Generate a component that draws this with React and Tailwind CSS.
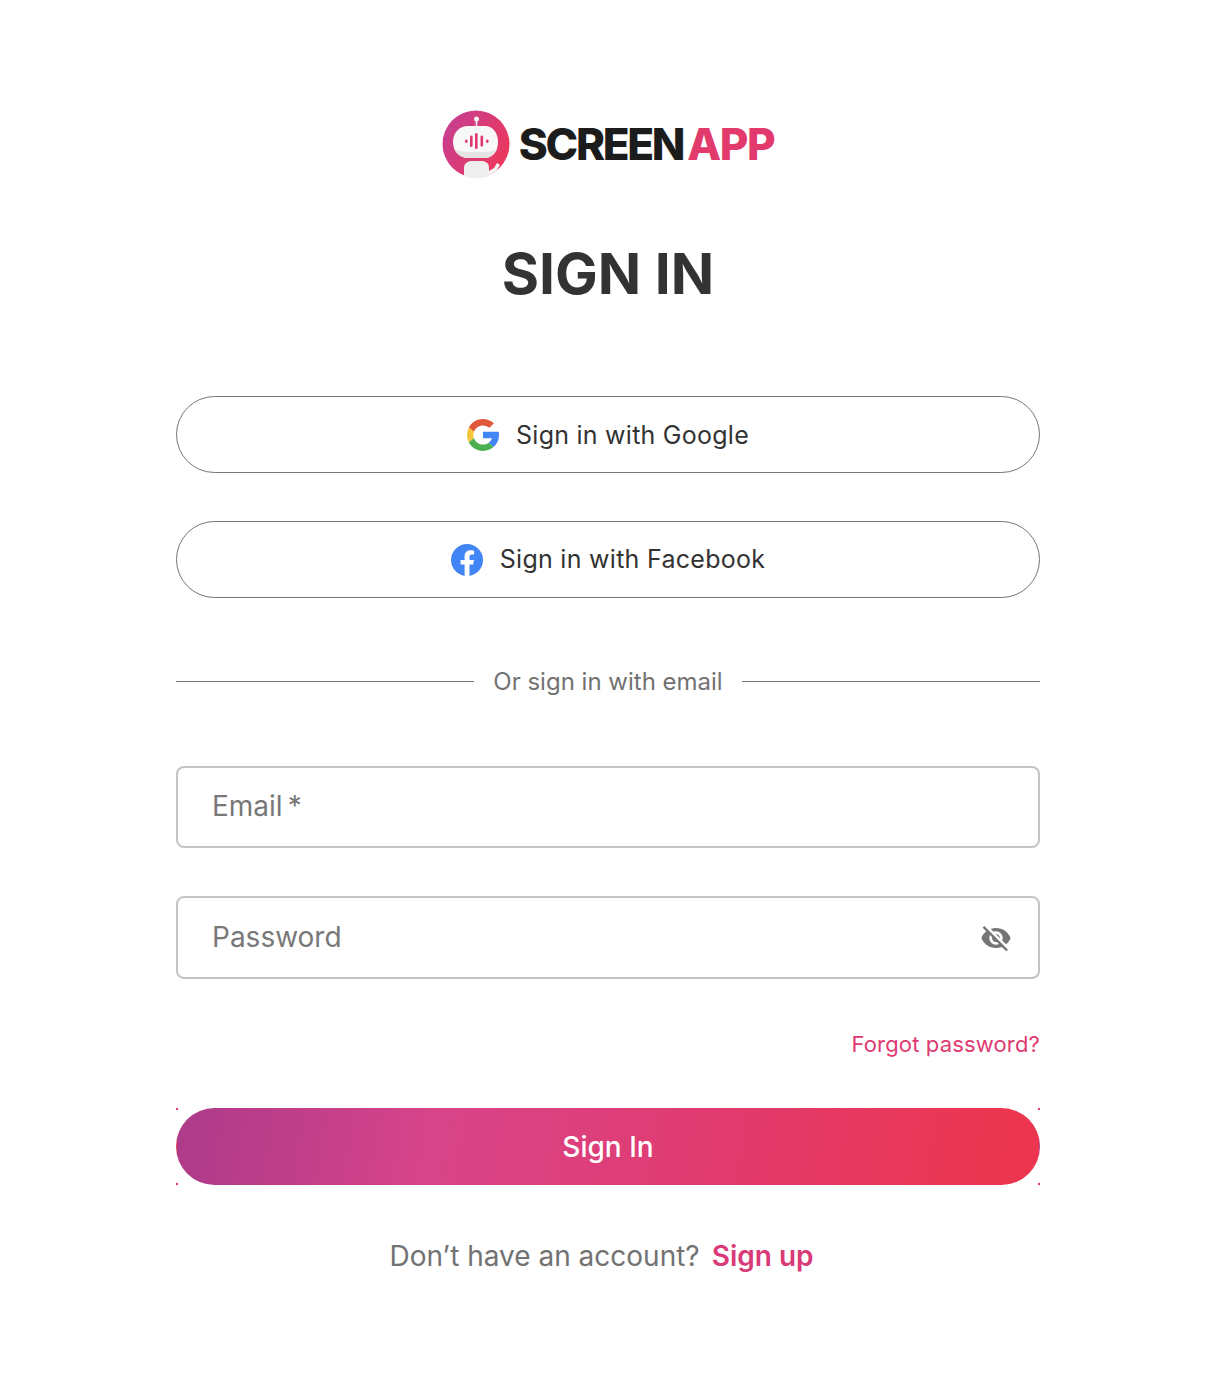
import React from "react";

const Logo = () => (
  <svg width="68" height="68" viewBox="0 0 68 68" className="shrink-0">
    <defs>
      <linearGradient id="lg" x1="0" y1="0.2" x2="1" y2="0.8">
        <stop offset="0" stopColor="#c63f92" />
        <stop offset="1" stopColor="#ee3758" />
      </linearGradient>
    </defs>
    <circle cx="34" cy="34" r="33.500" fill="url(#lg)" />
    <circle cx="34.500" cy="9" r="2.500" fill="#f3f3f3" />
    <rect x="33.700" y="10" width="1.600" height="7" fill="#f3f3f3" />
    <path d="M11 32c0-9 6-16 15-16h17c8 0 13 7 13 16 0 9-5 16-13 16H26c-9 0-15-7-15-16z" fill="#f8f8f8" />
    <path d="M12 39c3 5 8 9 14 9h17c5 0 10-4 12-9-3 2-7 3-12 3H26c-5 0-10-1-14-3z" fill="#e4e4e4" />
    <g fill="#e0386f">
      <rect x="23" y="29.500" width="2.600" height="3.400" rx="1.300" />
      <rect x="28" y="25.500" width="2.600" height="11.500" rx="1.300" />
      <rect x="33" y="23" width="2.600" height="16" rx="1.300" />
      <rect x="38.500" y="25.500" width="2.600" height="11" rx="1.300" />
      <rect x="44" y="29.500" width="2.600" height="3.400" rx="1.300" />
    </g>
    <path d="M22 66V58c0-5 4-7 8-7h9c5 0 8 2 8 7v8c-4 1.600-8 2-13 2s-8-.5-12-2z" fill="#eeeeee" />
    <path d="M47 61l5-3 3-5 3 2-4 6-7 4z" fill="#f8f8f8" />
  </svg>
);

const GoogleIcon = () => (
  <svg width="32" height="32" viewBox="4 4 40 40" className="shrink-0">
    <path fill="#F4C63D" d="M6.306 14.691A19.900 19.900 0 0 0 4 24c0 3.300.8 6.400 2.195 9.079l6.522-5.025A12 12 0 0 1 12 24c0-1.600.3-3.100.877-4.490z" />
    <path fill="#E0583A" d="M6.306 14.691l6.571 4.819C14.655 15.108 18.961 12 24 12c3.059 0 5.842 1.154 7.961 3.039l5.657-5.657C34.046 6.053 29.268 4 24 4 16.318 4 9.656 8.337 6.306 14.691z" />
    <path fill="#4CAF50" d="M24 44c5.166 0 9.860-1.977 13.409-5.192l-6.190-5.238A11.910 11.910 0 0 1 24 36c-5.202 0-9.619-3.317-11.283-7.946l-6.522 5.025C9.505 39.556 16.227 44 24 44z" />
    <path fill="#4285F4" d="M43.611 20.083H42V20H24v8h11.303a12.040 12.040 0 0 1-4.087 5.571l6.190 5.238C36.971 39.205 44 34 44 24c0-1.341-.138-2.650-.389-3.917z" />
  </svg>
);

const FacebookIcon = () => (
  <svg width="32" height="32" viewBox="0 0 32 32" className="shrink-0">
    <circle cx="16" cy="16" r="16" fill="#4285f4" />
    <path fill="#fff" d="M22.200 20.600l.7-4.600h-4.400v-3c0-1.300.6-2.500 2.600-2.500h2V6.600s-1.800-.3-3.500-.3c-3.600 0-6 2.200-6 6.200V16h-4v4.600h4v11.200c.8.100 1.600.2 2.400.2s1.700-.1 2.500-.2V20.600z" />
  </svg>
);

const EyeOff = () => (
  <svg width="32" height="32" viewBox="0 0 24 24" fill="#757575" className="shrink-0">
    <path d="M12 7c2.760 0 5 2.240 5 5 0 .65-.13 1.260-.36 1.830l2.920 2.920c1.510-1.260 2.700-2.890 3.430-4.750-1.730-4.390-6-7.500-11-7.500-1.400 0-2.740.25-3.980.7l2.160 2.160C10.740 7.130 11.350 7 12 7zM2 4.270l2.280 2.280.46.46C3.080 8.300 1.780 10.020 1 12c1.730 4.390 6 7.500 11 7.500 1.550 0 3.030-.3 4.380-.84l.42.42L19.730 22 21 20.730 3.270 3 2 4.270zM7.530 9.800l1.550 1.550c-.05.21-.08.43-.08.65 0 1.660 1.340 3 3 3 .22 0 .44-.03.65-.08l1.550 1.550c-.67.33-1.410.53-2.200.53-2.760 0-5-2.240-5-5 0-.79.2-1.530.53-2.200zm4.310-.78l3.150 3.150.02-.16c0-1.660-1.340-3-3-3l-.17.01z" />
  </svg>
);

export default function App() {
  return (
    <div className="min-h-[1394px] bg-white pt-[110px] pl-[176px] font-['Inter',sans-serif] text-[#333333]">
      <div className="w-[864px] flex flex-col">
        <div className="flex items-center justify-center h-[68px]">
          <Logo />
          <span className="ml-[9px] text-[44px] leading-none font-extrabold tracking-[-2.3px] text-[#1c1c1c]">SCREEN</span>
          <span className="ml-[4px] text-[44px] leading-none font-extrabold tracking-[-1.4px] text-[#e23a6d]">APP</span>
        </div>
        <h1 className="mt-[60px] text-center text-[57px] leading-[72px] font-bold text-[#333333]">SIGN IN</h1>

        <button className="mt-[86px] h-[77px] rounded-[39px] border border-[#757575] flex items-center justify-center gap-[17px] text-[25px] tracking-[0.25px]">
          <GoogleIcon />
          <span className="pt-0.5">Sign in with Google</span>
        </button>
        <button className="mt-[48px] h-[77px] rounded-[39px] border border-[#757575] flex items-center justify-center gap-[17px] text-[25px] tracking-[0.28px]">
          <FacebookIcon />
          <span>Sign in with Facebook</span>
        </button>

        <div className="mt-[67px] h-[32px] flex items-center">
          <div className="flex-1 h-px bg-[#757575]" />
          <span className="px-[19px] pt-0.5 text-[24px] leading-[32px] text-[#727272]">Or sign in with email</span>
          <div className="flex-1 h-px bg-[#757575]" />
        </div>

        <div className="mt-[69px] h-[82px] rounded-lg border-2 border-[#c4c4c4] flex items-center pl-[34px] pr-[35px]">
          <span className="text-[28px] text-[#787878] -mt-0.5">Email<span className="ml-[5px]">*</span></span>
        </div>
        <div className="mt-[48px] h-[83px] rounded-lg border-2 border-[#c4c4c4] flex items-center justify-between pl-[34px] pr-[26px]">
          <span className="text-[28px] text-[#787878] -mt-0.5">Password</span>
          <EyeOff />
        </div>

        <div className="mt-[49px] flex justify-end">
          <a className="text-[22px] leading-[32px] text-[#df3a72] tracking-[0.16px]">Forgot password?</a>
        </div>

        <div className="relative mt-[48px] h-[77px]">
          <button className="w-full h-full rounded-[39px] border border-transparent bg-[linear-gradient(100deg,#b03b8a_3%,#d84489_30%,#e23a6d_65%,#ec364f_95%)] text-white text-[28px] font-medium">
            Sign In
          </button>
          <span className="absolute left-0 top-0 w-0.5 h-0.5 bg-[#e0386f]" />
          <span className="absolute right-0 top-0 w-0.5 h-0.5 bg-[#e0386f]" />
          <span className="absolute left-0 bottom-0 w-0.5 h-0.5 bg-[#e0386f]" />
          <span className="absolute right-0 bottom-0 w-0.5 h-0.5 bg-[#e0386f]" />
        </div>

        <div className="mt-[50px] pr-[13px] flex justify-center items-center gap-[12px] text-[28px] leading-[42px]">
          <span className="text-[#727272]">Don’t have an account?</span>
          <a className="font-semibold text-[#d93a78]">Sign up</a>
        </div>
      </div>
    </div>
  );
}
